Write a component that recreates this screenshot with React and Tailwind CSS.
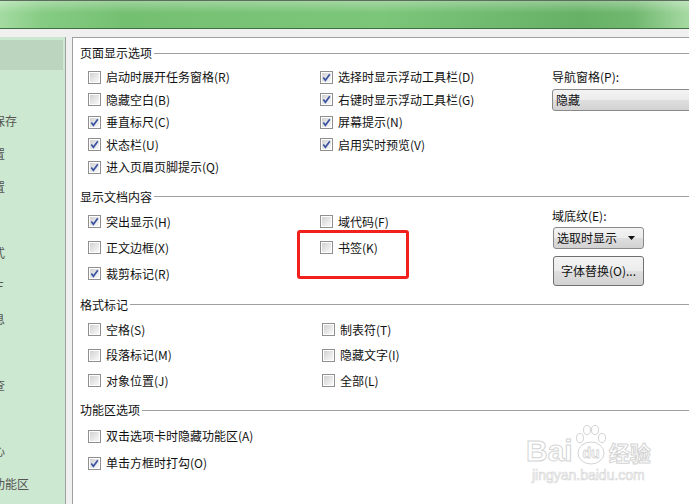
import React from 'react';

const sidebarItems = [
  '视图',
  '编辑',
  '常规与保存',
  '文件位置',
  '页面设置',
  '修订',
  '中文版式',
  '输出PDF',
  '用户信息',
  '打印',
  '拼写检查',
  '安全性',
  '信任中心',
  '自定义功能区',
];

function Box({ checked }) {
  return (
    <span className="flex w-[13px] h-[13px] shrink-0 border border-[#8f8f8f] bg-white p-[1px]">
      <span className="flex flex-1 items-center justify-center bg-[linear-gradient(135deg,#d2d2d2,#f9f9f9)]">
        {checked && (
          <svg width="9" height="9" viewBox="0 0 9 9">
            <path d="M1.3 4.6 L3.4 7.3 L7.8 1.2" fill="none" stroke="#3c53a3" strokeWidth="1.7" />
          </svg>
        )}
      </span>
    </span>
  );
}

function Check({ checked, label, h }) {
  return (
    <div className={`flex items-center gap-[5px] ${h}`}>
      <Box checked={checked} />
      <span className="whitespace-nowrap">{label}</span>
    </div>
  );
}

function Header({ title, className }) {
  return (
    <div className={`flex items-center h-[16px] pl-[7px] ${className}`}>
      <span className="whitespace-nowrap">{title}</span>
      <div className="flex-1 h-px bg-[#a0a0a0] ml-[2px]" />
    </div>
  );
}

const btnBg =
  'bg-[linear-gradient(180deg,#f3f3f3_0%,#ececec_48%,#dedede_52%,#d2d2d2_100%)]';

export default function App() {
  return (
    <div className="relative w-[689px] h-[504px] overflow-hidden bg-[#f0f0f0] flex flex-col text-[12px] text-[#111] font-['Noto_Sans_CJK_SC','Noto_Sans',sans-serif]">
      {/* title bar */}
      <div className="h-[29px] shrink-0 border-t border-t-[#5d6d5d] border-b border-b-[#3f6d3f] bg-[linear-gradient(180deg,rgba(255,255,255,0.3),rgba(255,255,255,0)_45%),linear-gradient(90deg,#a4dba2_0%,#86cc84_6%,#74c071_18%,#7cc67a_55%,#66b166_84%,#70b86f_92%,#a6daa2_100%)]" />
      <div className="h-[8px] shrink-0" />

      <div className="flex flex-1 min-h-0">
        {/* sidebar, scrolled so only the ends of the labels show */}
        <div className="w-[66px] shrink-0 bg-[#cde8d0] border-r border-[#a0a0a0] overflow-hidden pt-[1px] text-[#555]">
          {sidebarItems.map((item, i) => (
            <div key={item} className="h-[33px] flex items-center">
              <div className={`w-[63px] h-[30px] flex items-center ${i === 0 ? 'bg-[#bcd5bf]' : ''}`}>
                <span className="-ml-[43px] whitespace-nowrap">{item}</span>
              </div>
            </div>
          ))}
        </div>
        <div className="w-[6px] shrink-0" />

        {/* content */}
        <div className="flex-1 bg-white border-l border-t border-[#a0a0a0] pt-[7px]">
          <Header title="页面显示选项" />
          <div className="grid grid-cols-[232px_232px_1fr] pl-[15px] mt-[5px]">
            <div>
              <Check h="h-[22.5px]" label="启动时展开任务窗格(R)" />
              <Check h="h-[22.5px]" label="隐藏空白(B)" />
              <Check h="h-[22.5px]" checked label="垂直标尺(C)" />
              <Check h="h-[22.5px]" checked label="状态栏(U)" />
              <Check h="h-[22.5px]" checked label="进入页眉页脚提示(Q)" />
            </div>
            <div>
              <Check h="h-[22.5px]" checked label="选择时显示浮动工具栏(D)" />
              <Check h="h-[22.5px]" checked label="右键时显示浮动工具栏(G)" />
              <Check h="h-[22.5px]" checked label="屏幕提示(N)" />
              <Check h="h-[22.5px]" checked label="启用实时预览(V)" />
            </div>
            <div>
              <div className="h-[22.5px] flex items-center whitespace-nowrap">导航窗格(P):</div>
              <div className="h-[22.5px] flex items-center">
                <div className={`w-[160px] h-[22px] border border-[#8a8a8a] rounded-l-[3px] flex items-center pl-[3px] ${btnBg}`}>
                  隐藏
                </div>
              </div>
            </div>
          </div>

          <Header title="显示文档内容" className="mt-[10px]" />
          <div className="grid grid-cols-[232px_232px_1fr] pl-[15px] mt-[4px]">
            <div>
              <Check h="h-[26px]" checked label="突出显示(H)" />
              <Check h="h-[26px]" label="正文边框(X)" />
              <Check h="h-[26px]" checked label="裁剪标记(R)" />
            </div>
            <div>
              <Check h="h-[26px]" label="域代码(F)" />
              <Check h="h-[26px]" label="书签(K)" />
            </div>
            <div className="flex flex-col">
              <div className="h-[14px] flex items-center whitespace-nowrap">域底纹(E):</div>
              <div className={`ml-[1px] mt-[4px] w-[91px] h-[22px] border border-[#8a8a8a] rounded-[3px] flex items-center justify-between pl-[3px] pr-[8px] ${btnBg}`}>
                <span>选取时显示</span>
                <svg width="7" height="4" viewBox="0 0 7 4">
                  <path d="M0 0 H7 L3.5 4 Z" fill="#111" />
                </svg>
              </div>
              <div className={`ml-[1px] mt-[7px] w-[91px] h-[30px] border border-[#707070] rounded-[3px] flex items-center justify-center ${btnBg}`}>
                字体替换(O)...
              </div>
            </div>
          </div>

          <Header title="格式标记" className="mt-[10px]" />
          <div className="grid grid-cols-[232px_232px_1fr] pl-[15px] mt-[4.5px]">
            <div>
              <Check h="h-[25.5px]" label="空格(S)" />
              <Check h="h-[25.5px]" label="段落标记(M)" />
              <Check h="h-[25.5px]" label="对象位置(J)" />
            </div>
            <div className="ml-[2px]">
              <Check h="h-[25.5px]" label="制表符(T)" />
              <Check h="h-[25.5px]" label="隐藏文字(I)" />
              <Check h="h-[25.5px]" label="全部(L)" />
            </div>
          </div>

          <Header title="功能区选项" className="mt-[8.5px]" />
          <div className="pl-[15px] mt-[4.5px]">
            <Check h="h-[27px]" label="双击选项卡时隐藏功能区(A)" />
            <Check h="h-[27px]" checked label="单击方框时打勾(O)" />
          </div>
        </div>
      </div>

      {/* annotation */}
      <div className="absolute left-[297px] top-[230px] w-[112px] h-[49px] border-[3px] border-[#f2201d] rounded-[3px]" />

      {/* watermark */}
      <div className="absolute left-[526px] top-[424px] flex flex-col items-center font-['Liberation_Sans',sans-serif]">
        <div className="flex items-end">
          <span className="text-[30px] leading-[30px] font-bold text-white [-webkit-text-stroke:1px_#d4d4d4]">Bai</span>
          <svg width="34" height="42" viewBox="0 0 34 42" className="mx-[1px]">
            <g fill="white" stroke="#d4d4d4" strokeWidth="1">
              <ellipse cx="6" cy="14" rx="3.5" ry="4.5" />
              <ellipse cx="13" cy="6" rx="3.5" ry="4.5" />
              <ellipse cx="21" cy="6" rx="3.5" ry="4.5" />
              <ellipse cx="28" cy="14" rx="3.5" ry="4.5" />
              <ellipse cx="17" cy="29" rx="13" ry="11" />
            </g>
            <text x="17" y="34" textAnchor="middle" fontSize="14" fontWeight="bold" fill="white" stroke="#d4d4d4" strokeWidth="0.8" fontFamily="Liberation Sans">du</text>
          </svg>
          <span className="text-[21px] leading-[28px] font-bold text-white [-webkit-text-stroke:1px_#d4d4d4] font-['Noto_Sans_CJK_SC',sans-serif]">经验</span>
        </div>
        <span className="text-[14px] leading-[16px] mt-[1px] text-white [-webkit-text-stroke:0.7px_#d8d8d8]">jingyan.baidu.com</span>
      </div>
    </div>
  );
}
